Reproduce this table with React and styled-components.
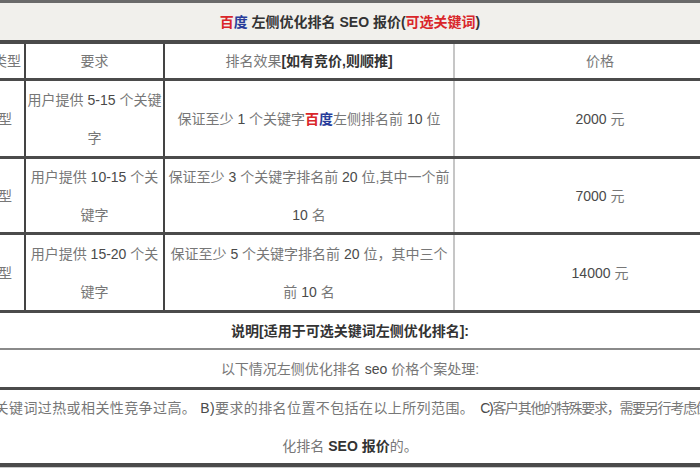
import React from 'react';
import styled, { createGlobalStyle } from 'styled-components';

const GlobalStyle = createGlobalStyle`
  html, body {
    margin: 0;
    padding: 0;
    background: #ffffff;
    overflow: hidden;
  }
  body {
    font-family: "Liberation Sans", "Noto Sans CJK SC", sans-serif;
  }
`;

const Page = styled.div`
  width: 700px;
  height: 470px;
  overflow: hidden;
  background: #ffffff;
`;

const Table = styled.div`
  width: 790px;
  margin-left: -45px;
  border-top: 3px solid #6a6a6a;
  display: flex;
  flex-direction: column;
`;

const Row = styled.div`
  position: relative;
  height: ${p => p.h}px;
  background: ${p => p.bg || '#ffffff'};
  border-bottom: ${p => p.bw || 3}px solid ${p => p.bc || '#4b4b4b'};
  box-shadow: 0 1px 0 #c9c9c9;
  z-index: 1;
  display: flex;
  align-items: center;
  justify-content: center;
  box-sizing: content-box;
`;

const GridRow = styled(Row)`
  display: grid;
  grid-template-columns: 71px 139px 290px 290px;
  align-items: stretch;
`;

const Cell = styled.div`
  display: flex;
  flex-direction: column;
  align-items: ${p => p.align || 'center'};
  justify-content: center;
  text-align: center;
  border-right: ${p => (p.edge ? `2px solid ${p.edge}` : 'none')};
  padding-right: ${p => p.pr || 0}px;
  width: ${p => (p.full ? '100%' : 'auto')};
  font-size: 14px;
  line-height: 38px;
  color: #777;
  white-space: nowrap;
  overflow: hidden;
`;

const Line = styled.div`
  font-size: ${p => p.fs || 14}px;
  line-height: 38px;
  color: ${p => p.color || '#777'};
  white-space: nowrap;
  text-align: ${p => p.align || 'center'};
  text-indent: ${p => p.indent || 0}px;
  width: ${p => (p.full ? '100%' : 'auto')};
`;

const Segment = styled.span`
  letter-spacing: ${p => p.ls || 0}px;
  margin-left: ${p => p.gap || 0}px;
`;

const Num = styled.span`
  color: #4a4a4a;
`;

const Strong = styled.span`
  font-weight: bold;
  color: ${p => p.color || '#333'};
`;

const Red = styled.span`
  color: #d9262a;
  font-weight: bold;
`;

const Blue = styled.span`
  color: #283c9a;
  font-weight: bold;
`;

const rows = [
  {
    type: '普通型',
    req: ['用户提供 5-15 个关键', '字'],
    effect: [
      <>保证至少 <Num>1</Num> 个关键字<Red>百</Red><Blue>度</Blue>左侧排名前 <Num>10</Num> 位</>
    ],
    price: '2000',
    h: 75,
  },
  {
    type: '中级型',
    req: ['用户提供 10-15 个关', '键字'],
    effect: [
      <>保证至少 <Num>3</Num> 个关键字排名前 <Num>20</Num> 位,其中一个前</>,
      <><Num>10</Num> 名</>,
    ],
    price: '7000',
    h: 73,
  },
  {
    type: '高级型',
    req: ['用户提供 15-20 个关', '键字'],
    effect: [
      <>保证至少 <Num>5</Num> 个关键字排名前 <Num>20</Num> 位，其中三个</>,
      <>前 <Num>10</Num> 名</>,
    ],
    price: '14000',
    h: 75,
  },
];

function Req({ text }) {
  const parts = text.split(/(\d+-\d+)/);
  return (
    <Line>
      {parts.map((p, i) => (/\d/.test(p) ? <Num key={i}>{p}</Num> : p))}
    </Line>
  );
}

export default function App() {
  return (
    <Page>
      <GlobalStyle />
      <Table>
        <Row h={37} bg="#f1f0ec" bw={4}>
          <Line color="#333">
            <Strong>
              <Red>百</Red><Blue>度</Blue> 左侧优化排名 SEO 报价(<Red>可选关键词</Red>)
            </Strong>
          </Line>
        </Row>

        <GridRow h={34}>
          <Cell edge="#444" align="flex-end" pr={3}>类型</Cell>
          <Cell edge="#444">要求</Cell>
          <Cell edge="#c6c6c6">
            <Line>排名效果<Strong>[如有竞价,则顺推]</Strong></Line>
          </Cell>
          <Cell>价格</Cell>
        </GridRow>

        {rows.map(r => (
          <GridRow key={r.type} h={r.h}>
            <Cell edge="#444" align="flex-end" pr={12}>{r.type}</Cell>
            <Cell edge="#444">
              {r.req.map(t => <Req key={t} text={t} />)}
            </Cell>
            <Cell edge="#c6c6c6">
              {r.effect.map((e, i) => <Line key={i}>{e}</Line>)}
            </Cell>
            <Cell>
              <Line><Num>{r.price}</Num> 元</Line>
            </Cell>
          </GridRow>
        ))}

        <Row h={35} bw={2} bc="#8a8a8a">
          <Line><Strong>说明[适用于可选关键词左侧优化排名]:</Strong></Line>
        </Row>

        <Row h={37}>
          <Line>以下情况左侧优化排名 <Num>seo</Num> 价格个案处理:</Line>
        </Row>

        <Row h={73} bw={4}>
          <Cell full>
            <Line full align="left" indent={-4}>
              <Segment ls={0.4}>A)所选关键词过热或相关性竞争过高。</Segment>
              <Segment gap={4} ls={0.4}><Num>B)</Num>要求的排名位置不包括在以上所列范围。</Segment>
              <Segment gap={6} ls={-1.3}><Num>C)</Num>客户其他的特殊要求，需要另行考虑优</Segment>
            </Line>
            <Line>
              化排名 <Strong>SEO 报价</Strong>的。
            </Line>
          </Cell>
        </Row>
      </Table>
    </Page>
  );
}
